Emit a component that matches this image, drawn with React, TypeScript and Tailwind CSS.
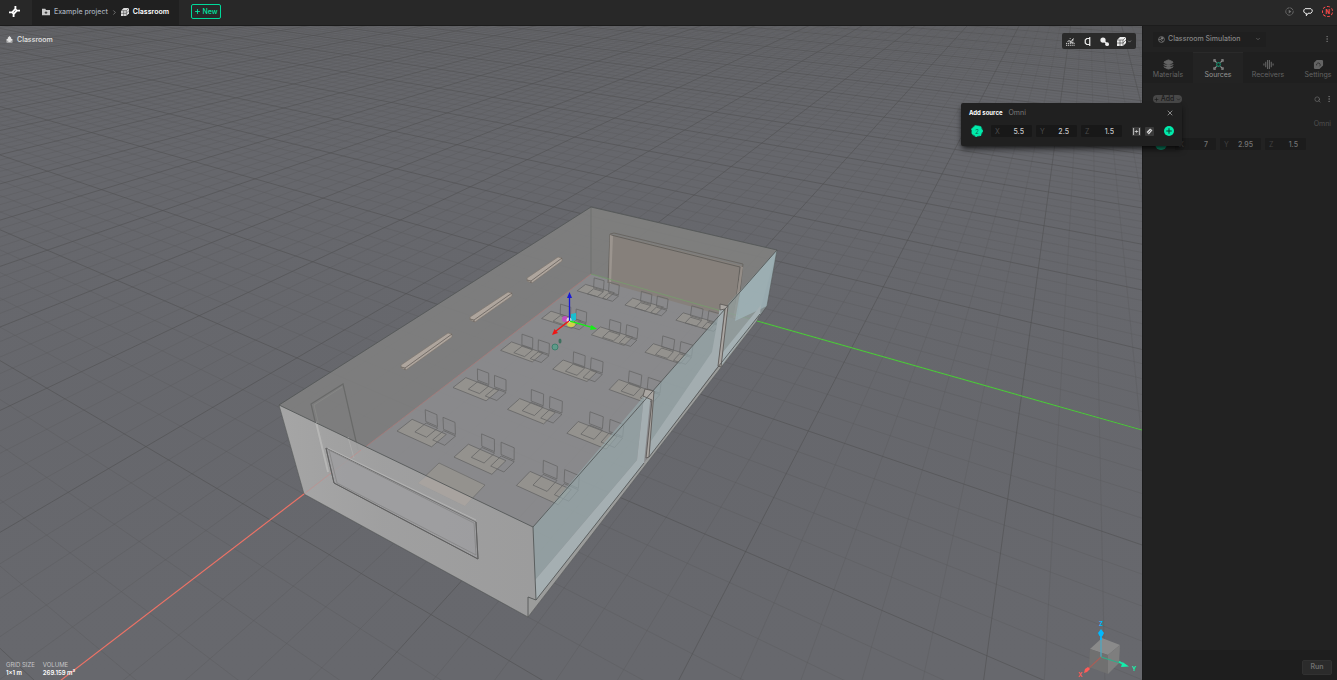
import { ReactNode } from 'react';
import { ChevronDown, ChevronRight, Layers, MoreVertical, Plus, Search, X } from 'lucide-react';
import clsx from 'clsx';

type Point = [number, number];

const ROOM = { length: 14, width: 6.75, height: 2.8 };

// Camera projection, normalised to the size of the room
function project(x: number, y: number, z = 0): [number, number, number] {
  const u = x / ROOM.length;
  const v = y / ROOM.width;
  const t = z / ROOM.height;
  const w = 1 - 0.36595 * u - 0.10469 * v - 0.0508 * t;
  return [
    (-398.25 * u + 86.75 * v - 30.02 * t + 591) / w,
    (39.22 * u + 13.39 * v - 77.52 * t + 274) / w,
    w,
  ];
}

function polygon(points: [number, number, number][]) {
  return points
    .map(([x, y, z]) => project(x, y, z).slice(0, 2).map((n) => n.toFixed(1)).join(','))
    .join(' ');
}

// Ground line, cut off before it passes behind the camera
function groundLine(axis: 'x' | 'y', at: number) {
  const far = -160;
  const near =
    axis === 'x'
      ? ((0.96 - (0.36595 * at) / ROOM.length) / 0.10469) * ROOM.width
      : ((0.96 - (0.10469 * at) / ROOM.width) / 0.36595) * ROOM.length;
  if (near <= far) return '';
  const a = axis === 'x' ? project(at, far) : project(far, at);
  const b = axis === 'x' ? project(at, near) : project(near, at);
  return `M${a[0].toFixed(1)} ${a[1].toFixed(1)}L${b[0].toFixed(1)} ${b[1].toFixed(1)}`;
}

const steps = Array.from({ length: 221 }, (_, i) => i - 160);
const gridPath = (major: boolean) =>
  steps
    .filter((n) => (n % 5 === 0) === major)
    .map((n) => groundLine('x', n) + groundLine('y', n))
    .join('');

const desks: Point[] = [0, 1, 2, 3, 4].flatMap((row) =>
  [0.98, 2.89, 4.8].map((y): Point => [2.05 + row * 2.25, y])
);

function Desk({ x, y }: { x: number; y: number }) {
  return (
    <g fill="none" stroke="#666666" strokeWidth={0.8} strokeLinejoin="round">
      <polygon
        points={polygon([[x, y, 0.75], [x + 0.57, y, 0.75], [x + 0.57, y + 1.18, 0.75], [x, y + 1.18, 0.75]])}
        fill="#94928e"
      />
      {[y + 0.14, y + 0.76].map((cy) => (
        <g key={cy}>
          <polygon points={polygon([[x - 0.34, cy, 0.45], [x - 0.34, cy + 0.41, 0.45], [x + 0.1, cy + 0.41, 0.45], [x + 0.1, cy, 0.45]])} />
          <polygon points={polygon([[x - 0.34, cy, 0.5], [x - 0.34, cy + 0.41, 0.5], [x - 0.38, cy + 0.41, 0.88], [x - 0.38, cy, 0.88]])} />
        </g>
      ))}
    </g>
  );
}

function Lamp({ from, to }: { from: Point; to: Point }) {
  const [x1, y1] = from;
  const [x2, y2] = to;
  return (
    <g strokeLinejoin="round" strokeWidth={0.7}>
      <path d={`M${x1} ${y1 - 1}L${x2} ${y2}l4 1v3L${x1 + 5} ${y1 + 4}l-5 -2z`} fill="#aea59d" stroke="#7d766f" />
      <path d={`M${x1} ${y1 + 1}l4 1L${x2 + 4} ${y2 + 1}M${x1 + 4} ${y1 + 2}v2`} fill="none" stroke="#5a5550" />
    </g>
  );
}

function Scene() {
  return (
    <svg className="absolute inset-0 h-full w-full" viewBox="0 26 1142 654" preserveAspectRatio="xMidYMid slice" aria-label="Classroom model">
      <defs>
        <linearGradient id="front" x1="0" x2="1">
          <stop offset="0" stopColor="#acacac" />
          <stop offset="0.4" stopColor="#a3a3a3" />
          <stop offset="1" stopColor="#9f9f9f" />
        </linearGradient>
        <linearGradient id="ground" x1="0" x2="0" y1="0" y2="1">
          <stop offset="0" stopColor="#646569" />
          <stop offset="0.2" stopColor="#66676c" />
          <stop offset="1" stopColor="#67686d" />
        </linearGradient>
      </defs>
      <rect y="26" width="1142" height="654" fill="url(#ground)" />
      <path d={gridPath(false)} stroke="#5a5b5c" strokeWidth={0.8} opacity={0.5} fill="none" />
      <path d={gridPath(true)} stroke="#515253" strokeWidth={0.9} opacity={0.7} fill="none" />

      {/* interior */}
      <g fillOpacity={0.9}>
        <polygon points="591,207 279,405 304,494 591,274" fill="#7f8080" />
        <polygon points="591,274 304,494 528,617 757,321" fill="#8d8d8f" />
        <polygon points="591,207 777,250 757,321 591,274" fill="#818180" />
      </g>
      <path d="M591 207V274" stroke="#6f706f" />
      <path d="M591 274L304 494" stroke="#b77e7b" strokeWidth={0.8} opacity={0.8} />
      <polygon points="610,234 743,266 735,319 608,283" fill="#86807b" />
      <path d="M611 235L740 267L734 318" fill="none" stroke="#5f5c59" strokeWidth={0.9} />
      <path d="M608 283L610 234L614 233L743 264L737 319" fill="none" stroke="#67635f" strokeWidth={0.9} />
      <path d="M613 236L611 284L609 283L610 235z" fill="#9b948e" />
      <path d="M741 267L733 318H736L743 267z" fill="#948d87" />
      <path d="M591 274L757 321" stroke="#76a06b" strokeWidth={0.9} opacity={0.8} />
      <Lamp from={[527, 279]} to={[558, 257]} />
      <Lamp from={[470, 318]} to={[508, 292]} />
      <Lamp from={[401, 366]} to={[448, 333]} />
      <path d="M327 472L311 404L343 384L358 450" fill="none" stroke="#686968" strokeWidth={1.2} />
      <path d="M330 471L314 405L342 387" fill="none" stroke="#888987" strokeWidth={0.8} />
      {desks.map(([x, y]) => (
        <Desk key={`${x}-${y}`} x={x} y={y} />
      ))}
      <polygon points="418,483 439,463 485,485 465,506" fill="#94928e" stroke="#6f6f6d" strokeWidth={0.8} />

      {/* front wall */}
      <polygon points="279,405 533,527 536,600 528,597 528,617 304,494" fill="url(#front)" fillOpacity={0.86} />
      <polygon points="418,483 427,476 472,498 465,506" fill="#a8a39f" />
      <path d="M316 422L328 472" stroke="#b6b6b5" strokeWidth={2} />
      <path d="M348 437L354 458" stroke="#acacab" />
      <path d="M361 450L304 494" stroke="#c18e8b" strokeWidth={0.8} opacity={0.8} />
      <polygon points="326,448 476,522 478,559 334,483" fill="#9d9da0" fillOpacity={0.8} stroke="#717171" />
      <path d="M476 522L478 559L334 483L326 448" fill="none" stroke="#5f5f5f" />
      <path d="M329 450L474 523L476 555L337 483z" fill="none" stroke="#858585" strokeWidth={0.8} />
      <path d="M328 448L476 520" stroke="#b5b5b5" strokeWidth={0.9} />

      {/* window wall */}
      <polygon points="528,597 536,600 644,463 649,457 718,367 761,312 757,321 528,617" fill="#9b9c9b" />
      <g fillOpacity={0.66}>
        <polygon points="533,527 644,396 637,460 535,580" fill="#97a8ac" />
        <polygon points="653,391 724,310 717,366 649,457" fill="#97a8ac" />
        <polygon points="728,304 777,250 767,306 721,366" fill="#93a2a3" />
        <polygon points="740,292 777,250 767,306 735,321" fill="#a4bac1" />
      </g>
      <polygon points="535,580 637,460 644,396 651,392 644,463 536,600" fill="#a5afb2" />
      <polygon points="712,352 720,307 724,308 718,366 649,457 651,441" fill="#a3adb0" />
      <polygon points="721,366 723,352 761,305 760,314" fill="#a5b1b4" />
      <path d="M643 396L645 389L654 391L649 457L646 458L652 400z" fill="#aaa6a2" stroke="#5d5a58" strokeWidth={0.9} />
      <path d="M720 310V304L728 306L721 367L718 366L725 309z" fill="#aaa6a2" stroke="#5d5a58" strokeWidth={0.9} />
      <g fill="none" stroke="#555858" strokeWidth={0.9}>
        <path d="M591 207L279 405L533 527L777 250z" />
        <path d="M533 527L536 600L644 463M649 457L718 367L760 314" />
        <path d="M528 617V597L536 600" />
        <path d="M279 405L304 494L528 617L757 321L759 316" strokeOpacity={0.7} />
        <path d="M777 250L767 306L760 316" strokeOpacity={0.7} />
      </g>

      {/* axes */}
      <path d="M304 494L56 684" stroke="#ec7468" strokeWidth={1.2} />
      <path d="M757 321L1142 430" stroke="#4fc33f" strokeWidth={1.2} />

      {/* placed source and move handle */}
      <circle cx="555" cy="347" r="3" fill="#5f9b8a" stroke="#347866" strokeWidth={0.8} />
      <ellipse cx="560" cy="341" rx="1.5" ry="2.5" fill="#3f705f" />
      <circle cx="565" cy="319" r="3" fill="#c04fc0" />
      <path d="M571 314l5 -1v7l-5 1z" fill="#18bfd0" />
      <ellipse cx="571" cy="324" rx="4" ry="3" fill="#d2cf4b" />
      <circle cx="569" cy="320" r="2.5" fill="#dfe3e3" />
      <path d="M569.500 321V298" stroke="#1717d8" strokeWidth={1.3} />
      <path d="M569.500 292l2.500 6h-5z" fill="#1717d8" />
      <path d="M570 321L591 327" stroke="#15ee15" strokeWidth={1.3} />
      <path d="M597 329l-7 1 1.500 -5z" fill="#15ee15" />
      <path d="M569 321L556 331" stroke="#f01414" strokeWidth={1.3} />
      <path d="M552 335l2.500 -6 3.500 4z" fill="#f01414" />
    </svg>
  );
}

function OrientationCube() {
  return (
    <svg className="absolute right-0 bottom-0 h-[62px] w-[68px]" viewBox="1074 618 68 62" aria-label="Orientation">
      <polygon points="1090,649 1102,638 1120,645 1108,655" fill="#8a8a8a" />
      <polygon points="1090,649 1108,655 1108,674 1089,667" fill="#707070" />
      <polygon points="1108,655 1120,645 1119,663 1108,674" fill="#7e7e7e" />
      <path d="M1101 657V638" stroke="#4ea7c0" strokeWidth={1.3} />
      <path d="M1101 640V633" stroke="#00b9ff" strokeWidth={1.8} />
      <path d="M1101 629l3 4-1.500 3h-3l-1.500 -3z" fill="#00b9ff" />
      <path d="M1101 657L1120 663" stroke="#2fae88" strokeWidth={1.2} />
      <path d="M1119 661.500L1122 663.500" stroke="#12f0ac" strokeWidth={1.6} />
      <path d="M1129 666.500l-8 .5 1.500 -5z" fill="#12f0ac" />
      <path d="M1101 657L1088 669" stroke="#a85e57" strokeWidth={1.1} />
      <path d="M1084 673l1 -4 3-2 2 2-3 3z" fill="#ff5b58" />
      <g fontFamily="Inter, sans-serif" fontSize="6" fontWeight="700">
        <text x="1099" y="626" fill="#00b9ff">Z</text>
        <text x="1132" y="671" fill="#12f0ac">Y</text>
        <text x="1078" y="677" fill="#ff5b58">X</text>
      </g>
    </svg>
  );
}

function Icon({ children, className }: { children: ReactNode; className?: string }) {
  return (
    <svg className={clsx('shrink-0', className)} viewBox="0 0 12 12" fill="none" stroke="currentColor" strokeWidth={1.2} aria-hidden="true">
      {children}
    </svg>
  );
}

const CubeShape = () => (
  <>
    <path d="M4 0h8v8l-4 4H0V4z" fill="currentColor" stroke="none" />
    <path d="M0 4h8v8M8 4l4-4M4 4v8M0 8h8l4-4" stroke="#252525" strokeWidth={0.7} />
  </>
);

function CoordField({ axis, value, dim }: { axis: string; value: string; dim?: boolean }) {
  return (
    <label className={clsx('flex h-3 w-[41px] items-center rounded-[1px] px-1', dim ? 'bg-[#1c1c1c] text-[#414141]' : 'bg-[#181818] text-[#4b4b4b]')}>
      <span>{axis}</span>
      <input
        defaultValue={value}
        className={clsx('w-0 flex-1 bg-transparent pr-1 text-right font-medium outline-none', dim ? 'text-[#747474]' : 'text-[#c9c9c9]')}
      />
    </label>
  );
}

function Header() {
  return (
    <header className="flex h-[26px] shrink-0 items-stretch border-b border-[#1c1c1c] bg-[#282828]">
      <a href="#" aria-label="Home" className="flex w-8 items-center justify-center pr-[3px] pb-[2px] text-white">
        <Icon className="size-[11px]">
          <path d="M7 0v3.500L8.500 5H12M5 12V8.500L3.500 7H0M7 3L3.500 7M8.500 5L5 9" strokeWidth={2} />
        </Icon>
      </a>
      <nav className="flex w-[147px] items-center bg-[#202020] pb-px pl-[10px] text-[7px] font-medium">
        <Icon className="mr-1 size-2 text-[#c9c9c9]">
          <path d="M0 1h5l1 2h6v8H0z" fill="currentColor" stroke="none" />
          <path d="M6 5v4M4 7h4" stroke="#222" />
        </Icon>
        <a href="#" className="text-[#a5adb9]">Example project</a>
        <ChevronRight className="mx-[3px] size-[7px] text-[#a5a5a5]" />
        <Icon className="mr-1 size-2 text-[#dddddd]"><CubeShape /></Icon>
        <a href="#" className="font-semibold text-white">Classroom</a>
      </nav>
      <button className="my-1 ml-3 flex h-[15px] w-[30px] items-center justify-center gap-px rounded-[2px] border border-[#00d99a] text-[7px] leading-[13px] font-medium text-[#00e6a4]">
        <Plus className="size-[7px]" strokeWidth={3} />
        New
      </button>
      <div className="ml-auto flex items-center gap-[9px] pr-1 pb-[2px]">
        <button aria-label="History" className="text-[#707070]">
          <Icon className="size-[9px]">
            <circle cx="6" cy="6" r="5" strokeDasharray="5 1" />
            <path d="M5 3.500L8.500 6 5 8.500z" fill="currentColor" stroke="none" />
          </Icon>
        </button>
        <button aria-label="Comments" className="text-[#eeeeee]">
          <Icon className="size-[10px]"><path d="M2.500 2h7l1.500 1.500v2L9.500 7.500H6L4 10.500V7.500H2.500L1 6V3.500z" strokeLinejoin="round" /></Icon>
        </button>
        <button aria-label="Account" className="flex size-[11px] items-center justify-center rounded-full border border-dashed border-[#ff4d4d] text-[6px] leading-[9px] font-bold text-[#ff4d4d]">
          N
        </button>
      </div>
    </header>
  );
}

function ViewToolbar() {
  return (
    <div className="absolute top-[7px] right-[6px] flex h-4 w-[74px] items-center justify-between rounded-[2px] bg-[#2a2a2a] px-1 text-[#ededed]">
      <button aria-label="Surface grid">
        <Icon className="size-[9px]"><path d="M0 11h12M0 8.500h12" strokeDasharray="1.500 1" /><path d="M2 6l2-1 3 1 3-4M5 2h1M8 4h2M5 7h5" /></Icon>
      </button>
      <button aria-label="Snapping">
        <Icon className="size-[9px]"><path d="M9 0v12M9 2H5L3 4v4l2 2h4" strokeWidth={1.6} /></Icon>
      </button>
      <button aria-label="Source markers">
        <Icon className="size-[9px]"><circle cx="4" cy="4" r="3.500" fill="currentColor" stroke="none" /><path d="M4 4l5 5" strokeWidth={2} /><circle cx="9.500" cy="9.500" r="2.500" fill="currentColor" stroke="none" /></Icon>
      </button>
      <button aria-label="Display mode" className="flex items-center gap-px">
        <Icon className="size-[9px]"><CubeShape /></Icon>
        <ChevronDown className="size-[5px]" />
      </button>
    </div>
  );
}

function Viewport() {
  return (
    <section className="relative flex-1 overflow-hidden bg-[#66676c]">
      <Scene />
      <div className="relative flex items-center gap-1 pt-2 pl-[6px] text-[7px] leading-[11px] font-medium text-[#e2e2e2]">
        <Icon className="size-[7px]">
          <path d="M6 0l3 3v2h2v6H1V5h2V3z" fill="currentColor" stroke="none" />
          <path d="M1 9h3M8 9h3" stroke="#707070" />
        </Icon>
        Classroom
      </div>
      <ViewToolbar />
      <dl className="absolute bottom-[3px] left-[6px] flex gap-2 text-[6px] leading-2 text-[#c5c5c7]">
        <div>
          <dt>GRID SIZE</dt>
          <dd className="font-semibold text-white">1×1 m</dd>
        </div>
        <div>
          <dt>VOLUME</dt>
          <dd className="font-semibold text-white">269.159 m³</dd>
        </div>
      </dl>
      <OrientationCube />
    </section>
  );
}

const tabs = [
  { name: 'Materials', icon: <Layers className="size-[11px] fill-current" /> },
  {
    name: 'Sources',
    icon: (
      <Icon className="size-[11px]">
        <path d="M1 3V1h2M9 1h2v2M11 9v2H9M3 11H1V9M2 2l2 2M10 2L8 4M10 10L8 8M2 10l2-2" />
        <circle cx="6" cy="6" r="2" stroke="#178a69" />
      </Icon>
    ),
  },
  {
    name: 'Receivers',
    icon: (
      <Icon className="size-[11px]">
        <path d="M1 5v2M3 3v6M5 1v10M7 1v10M9 3v6M11 5v2" />
      </Icon>
    ),
  },
  {
    name: 'Settings',
    icon: (
      <Icon className="size-[11px]">
        <path d="M4 1h6l1 1v5l-4 4H2l-1-1V4z" fill="currentColor" stroke="none" />
        <path d="M4 7a2 2 0 1 1 3 1" stroke="#232323" strokeWidth={0.8} />
      </Icon>
    ),
  },
];

function Sidebar() {
  return (
    <aside className="flex w-[195px] shrink-0 flex-col overflow-hidden border-l border-[#1b1b1b] bg-[#222222] text-[7px] text-[#646464]">
      <div className="flex h-[26px] items-center pl-[10px]">
        <div className="flex h-[15px] w-[113px] items-center gap-[3px] rounded-[1px] bg-[#1f1f1f] pr-[5px] pl-[5px] text-[#858585]">
          <Icon className="size-[7px]">
            <circle cx="6" cy="6" r="5" />
            <circle cx="7" cy="4" r="1.500" fill="currentColor" />
            <path d="M1 6h4l3 4" />
          </Icon>
          <select aria-label="Simulation" className="h-[15px] w-0 flex-1 appearance-none bg-transparent font-medium outline-none">
            <option>Classroom Simulation</option>
          </select>
          <ChevronDown className="size-[6px]" />
        </div>
        <button aria-label="Simulation menu" className="mr-[6px] ml-auto">
          <MoreVertical className="size-2 text-[#777777]" />
        </button>
      </div>
      <div role="tablist" className="flex h-[31px] bg-[#1f1f1f]">
        {tabs.map((tab) => (
          <button
            key={tab.name}
            role="tab"
            aria-selected={tab.name === 'Sources'}
            className={clsx(
              'flex w-[50px] shrink-0 flex-col items-center justify-center border-t pt-px leading-[9px]',
              tab.name === 'Sources' ? 'border-[#2a2a2a] bg-[#232323] text-[#949494]' : 'border-transparent'
            )}
          >
            {tab.icon}
            {tab.name}
          </button>
        ))}
      </div>
      <div className="mt-3 flex h-2 items-center gap-1 pr-1 pl-[10px]">
        <button className="mr-auto flex h-2 w-[29px] items-center justify-center gap-[2px] rounded-full bg-[#484848] leading-2 font-medium text-[#1a1a1a]">
          <Plus className="size-[5px]" strokeWidth={3} />
          Add
          <ChevronDown className="size-[5px]" strokeWidth={3} />
        </button>
        <button aria-label="Search"><Search className="size-[7px] text-[#777777]" /></button>
        <button aria-label="List menu"><MoreVertical className="size-2 text-[#777777]" /></button>
      </div>
      <div className="mt-4 pr-[6px] text-right leading-[10px] text-[#515151]">Omni</div>
      <div className="mt-2 flex h-[14px] items-center gap-1 pl-3 leading-[9px]">
        <span className="mr-1 size-3 rounded-full bg-[#0b8b67]" />
        <CoordField axis="X" value="7" dim />
        <CoordField axis="Y" value="2.95" dim />
        <CoordField axis="Z" value="1.5" dim />
      </div>
      <footer className="mt-auto flex h-[30px] items-center justify-end bg-[#1e1e1e] pt-1 pr-[5px]">
        <button className="h-[15px] w-[30px] rounded-[2px] border border-[#313131] bg-[#2b2b2b] font-semibold text-[#6f6f6f]">Run</button>
      </footer>
    </aside>
  );
}

function AddSourceDialog() {
  return (
    <form className="absolute top-[77px] right-[155px] h-[43px] w-[221px] rounded-[2px] bg-[#202020] pt-1 pr-2 pl-2 text-[7px] leading-[9px] shadow-md shadow-black/60">
      <div className="flex h-[11px] items-center gap-[6px]">
        <h2 className="text-[6px] font-bold text-white">Add source</h2>
        <span className="text-[#7c7c7c]">Omni</span>
        <button type="button" aria-label="Close" className="ml-auto"><X className="size-2 text-[#bdbdbd]" /></button>
      </div>
      <div className="mt-[7px] flex items-center gap-1 pl-[2px]">
        <span className="mr-1 flex size-3 items-center justify-center rounded-full border border-dashed border-[#0b7a5c] bg-[#00eaab] text-[6px] text-[#12644e]">2</span>
        <CoordField axis="X" value="5.5" />
        <CoordField axis="Y" value="2.5" />
        <CoordField axis="Z" value="1.5" />
        <button type="button" aria-label="Set distance" className="ml-[6px] flex size-[9px] items-center justify-center rounded-[1px] bg-[#3a3a3a] text-[#d5d5d5]">
          <Icon className="size-[7px]"><path d="M1 0v12M11 0v12M3 6h6M6 4v4" strokeWidth={1.4} /></Icon>
        </button>
        <button type="button" aria-label="Snap to surface" className="flex size-[9px] items-center justify-center rounded-[1px] bg-[#3a3a3a] text-[#d5d5d5]">
          <Icon className="size-[7px]"><path d="M1 7l6-6 4 3-6 7z" fill="currentColor" stroke="none" /><path d="M4 8l4-4" stroke="#3a3a3a" /></Icon>
        </button>
        <button type="submit" aria-label="Add source" className="ml-auto flex size-[10px] items-center justify-center rounded-full bg-[#00eaab] text-[#12362d]">
          <Plus className="size-2" strokeWidth={3} />
        </button>
      </div>
    </form>
  );
}

export default function App() {
  return (
    <div className="flex min-h-screen flex-col bg-[#222222] font-['Inter',sans-serif]">
      <Header />
      <main className="relative flex flex-1">
        <Viewport />
        <Sidebar />
        <AddSourceDialog />
      </main>
    </div>
  );
}
